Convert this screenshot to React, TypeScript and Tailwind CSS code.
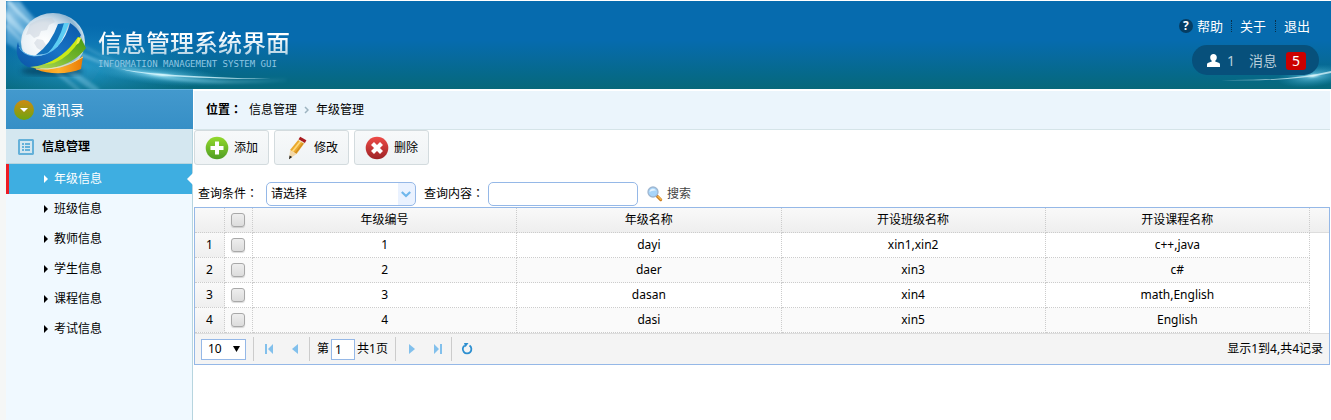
import React from "react";

const rows = [
  ["1", "dayi", "xin1,xin2", "c++,java"],
  ["2", "daer", "xin3", "c#"],
  ["3", "dasan", "xin4", "math,English"],
  ["4", "dasi", "xin5", "English"],
];
const heads = ["年级编号", "年级名称", "开设班级名称", "开设课程名称"];
const menu = ["年级信息", "班级信息", "教师信息", "学生信息", "课程信息", "考试信息"];

function HeaderArt() {
  return (
    <>
      <svg className="absolute left-0 top-0" width="360" height="88" viewBox="0 0 360 88" aria-hidden="true">
        <defs>
          <radialGradient id="corner" gradientUnits="userSpaceOnUse" cx="4" cy="14" r="120">
            <stop offset="0" stopColor="#bfe4f8" stopOpacity="0.75" />
            <stop offset="0.3" stopColor="#5fb4e2" stopOpacity="0.5" />
            <stop offset="1" stopColor="#1c8fc8" stopOpacity="0" />
          </radialGradient>
          <radialGradient id="flare">
            <stop offset="0" stopColor="#d9fbff" stopOpacity="0.95" />
            <stop offset="0.25" stopColor="#6cc8e6" stopOpacity="0.6" />
            <stop offset="1" stopColor="#2a9cc4" stopOpacity="0" />
          </radialGradient>
          <radialGradient id="haze">
            <stop offset="0" stopColor="#2fa6d6" stopOpacity="0.7" />
            <stop offset="1" stopColor="#1688bd" stopOpacity="0" />
          </radialGradient>
          <linearGradient id="streak" gradientUnits="userSpaceOnUse" x1="0" x2="290" y1="0" y2="0">
            <stop offset="0" stopColor="#d8f2ff" stopOpacity="0.7" />
            <stop offset="0.35" stopColor="#7cc8e8" stopOpacity="0.5" />
            <stop offset="0.55" stopColor="#b5edfa" stopOpacity="0.7" />
            <stop offset="1" stopColor="#7fd0ea" stopOpacity="0" />
          </linearGradient>
          <filter id="soft"><feGaussianBlur stdDeviation="1.4" /></filter>
        </defs>
        <ellipse cx="80" cy="66" rx="120" ry="42" fill="url(#haze)" />
        <path d="M0 0H14Q40 36 92 60L110 88H75Q30 60 0 42Z" fill="url(#corner)" filter="url(#soft)" />
        <g filter="url(#soft)" fill="none" stroke="url(#streak)">
          <path d="M2 0Q40 46 110 66T280 79" strokeWidth="3" />
          <path d="M60 32Q90 58 150 74" strokeWidth="2" opacity="0.6" />
          <path d="M-4 10Q30 48 92 90" strokeWidth="6" opacity="0.7" />
          <path d="M0 24Q30 56 74 90" strokeWidth="4" opacity="0.5" />
        </g>
        <ellipse cx="155" cy="74" rx="70" ry="10" fill="url(#flare)" transform="rotate(5 155 74)" />
        <path d="M115 68Q150 75 265 78Q150 78 115 68" fill="#d7f7ff" opacity="0.8" />
      </svg>
      <svg className="absolute bottom-0 right-0" width="150" height="45" viewBox="0 0 150 45" aria-hidden="true">
        <ellipse cx="132" cy="32" rx="36" ry="11" fill="url(#flare)" transform="rotate(-6 132 32)" />
        <path d="M40 36Q110 37 150 27V29Q110 38 40 36" fill="#e4fbff" opacity="0.7" />
      </svg>
    </>
  );
}

function Globe() {
  return (
    <svg width="88" height="88" viewBox="0 1 88 88" className="shrink-0" aria-hidden="true">
      <defs>
        <radialGradient id="gl" cx="0.36" cy="0.5" r="0.66">
          <stop offset="0" stopColor="#ffffff" />
          <stop offset="0.5" stopColor="#eaf1f6" />
          <stop offset="0.85" stopColor="#8fb6d2" />
          <stop offset="1" stopColor="#e8f4fb" />
        </radialGradient>
        <linearGradient id="bl" x1="0" y1="1" x2="1" y2="0">
          <stop offset="0" stopColor="#0b56a6" />
          <stop offset="0.5" stopColor="#1873c6" />
          <stop offset="1" stopColor="#0a58a8" />
        </linearGradient>
        <linearGradient id="gr" x1="0" y1="1" x2="1" y2="0">
          <stop offset="0" stopColor="#b6dc5c" />
          <stop offset="0.5" stopColor="#76b82f" />
          <stop offset="1" stopColor="#489a10" />
        </linearGradient>
        <linearGradient id="or" x1="0" y1="0" x2="1" y2="0">
          <stop offset="0" stopColor="#f08a0c" />
          <stop offset="0.5" stopColor="#ffb22e" />
          <stop offset="1" stopColor="#e97a04" />
        </linearGradient>
        <filter id="sh"><feGaussianBlur stdDeviation="2.5" /></filter>
      </defs>
      <ellipse cx="46" cy="71" rx="31" ry="5" fill="#03304f" opacity="0.6" filter="url(#sh)" />
      <ellipse cx="47" cy="42" rx="32" ry="29" fill="url(#gl)" />
      <path d="M24 24Q34 17 46 18L49 22 43 25 41 30 35 31 33 36 28 38 24 34 20 35ZM31 39l6 1 3 5-4 6-5-3-3-5z" fill="#c3ccd6" opacity="0.45" />
      <path d="M30 55Q45 44 52 24L60 23Q56 42 44 54Z" fill="#1272bd" />
      <path d="M41 54Q53 42 58 23L63 23Q57 43 46 53Z" fill="#5ccdf3" />
      <path d="M12 42Q14 54 28 56Q42 56 52 46Q61 36 64 23Q71 27 75 35Q66 53 50 61Q35 69 22 67Q13 63 11 54Q10 47 12 42Z" fill="url(#bl)" />
      <path d="M13 47Q17 55 28 56Q42 56 52 46" fill="none" stroke="#6bc4f1" strokeWidth="0.8" />
      <path d="M24 67Q56 64 72 37L75 38L80 48Q68 64 46 68Q33 70 24 67Z" fill="url(#gr)" />
      <path d="M36 65Q58 58 72 37L75 38Q64 57 48 63Z" fill="#c9ea18" />
      <path d="M72 38L75 38L73 43L70 45Z" fill="#eef04a" />
      <path d="M28 68Q34 70 46 69Q64 67 77 56L75 69Q64 74 46 73Q34 72 28 68Z" fill="url(#or)" />
      <path d="M30 69Q54 71 77 57" fill="none" stroke="#ffe9a8" strokeWidth="0.8" />
    </svg>
  );
}

function AddIcon() {
  return (
    <svg width="24" height="24" viewBox="0 0 24 24" aria-hidden="true">
      <defs><linearGradient id="add" x2="0" y2="1"><stop stopColor="#93d92c" /><stop offset="1" stopColor="#4f9d25" /></linearGradient></defs>
      <circle cx="12" cy="12" r="11.3" fill="url(#add)" />
      <path d="M10 5.5h4V10h4.5v4H14v4.5h-4V14H5.5v-4H10z" fill="#fff" />
    </svg>
  );
}
function EditIcon() {
  return (
    <svg width="24" height="24" viewBox="0 0 24 24" aria-hidden="true">
      <path d="M5 14L13.500 3.500l6 3.500L11.500 18z" fill="#eaa92d" />
      <path d="M7.500 15.500L16 4.800" stroke="#ffd878" strokeWidth="1.800" />
      <path d="M10.500 17.200L18.600 6.500" stroke="#d08a1e" strokeWidth="1.200" />
      <path d="M13.500 3.300L15.200.8l6.200 3.400-1.500 2.800z" fill="#a91b20" />
      <path d="M13.200 3.800l6.200 3.600" stroke="#e8e1d2" strokeWidth="1" />
      <path d="M5 14l6.500 4-7.200 5z" fill="#f3d8a8" />
      <path d="M4.600 19.500l2.600 1.600L4 23.300z" fill="#1d1d1d" />
    </svg>
  );
}
function DeleteIcon() {
  return (
    <svg width="24" height="24" viewBox="0 0 24 24" aria-hidden="true">
      <defs><linearGradient id="del" x2="0" y2="1"><stop stopColor="#ee4b47" /><stop offset="1" stopColor="#9d2326" /></linearGradient></defs>
      <circle cx="12" cy="12" r="11.3" fill="url(#del)" />
      <path d="M7.5 7.5l9 9m0-9l-9 9" stroke="#fff" strokeWidth="4.2" />
    </svg>
  );
}

const tools = [
  { label: "添加", icon: <AddIcon /> },
  { label: "修改", icon: <EditIcon /> },
  { label: "删除", icon: <DeleteIcon /> },
];

const box =
  "mb-px ml-[6px] block size-[14px] appearance-none rounded-[3px] border border-[#a8a8a8] bg-linear-to-b from-[#eeeeee] to-[#dcdcdc] shadow-[0_1px_1px_rgba(0,0,0,0.15)] checked:from-[#70aee8] checked:to-[#4a90d9]";
const cell = "h-[25px] border-b border-r border-dotted border-[#cccccc] p-0 text-center font-normal";

function Colon() {
  return <span className="font-['Noto_Sans_CJK_TC',sans-serif] leading-none">：</span>;
}

function PageButton({ label, d }: { label: string; d: string }) {
  return (
    <button type="button" aria-label={label} className="flex size-[26px] items-center justify-center">
      <svg width="10" height="10" viewBox="0 0 10 10" fill="#82c0ec" aria-hidden="true"><path d={d} /></svg>
    </button>
  );
}

function Separator() {
  return <span className="h-6 w-px shrink-0 bg-[#cccccc]" />;
}

export default function App() {
  return (
    <div className="flex min-h-screen flex-col border-l-[6px] border-[#f5f7f6] bg-white pt-px font-['Noto_Sans','Noto_Sans_CJK_SC',sans-serif] text-[12px] leading-4 text-black">
      <header className="relative flex h-[88px] justify-between overflow-hidden bg-linear-to-b from-[#066bae] from-45% via-[#076a9c] via-65% to-[#07687a]">
        <HeaderArt />
        <div className="relative flex items-start">
          <Globe />
          <div className="pl-1 pt-[26px]">
            <h1 className="bg-linear-to-b from-white from-30% to-[#a5cbdf] bg-clip-text text-[24px] font-medium leading-8 text-transparent">信息管理系统界面</h1>
            <p className="font-['DejaVu_Sans_Mono',monospace] text-[9px] leading-[10px] text-[#8fc6e2]">INFORMATION MANAGEMENT SYSTEM GUI</p>
          </div>
        </div>
        <div className="relative flex flex-col items-end gap-[9px] pt-[15px] text-white">
          <nav className="flex items-center pr-[21px] text-[13px] leading-5">
            <a href="#help" className="flex items-center gap-1 pr-2">
              <span className="flex size-[14px] items-center justify-center rounded-full bg-[#063d63] text-[12px] font-bold leading-3">?</span>
              帮助
            </a>
            <a href="#about" className="relative px-[9px] before:absolute before:left-0 before:top-1 before:h-3 before:border-l before:border-dotted before:border-[#08304a]">关于</a>
            <a href="#exit" className="relative pl-[9px] before:absolute before:left-0 before:top-1 before:h-3 before:border-l before:border-dotted before:border-[#08304a]">退出</a>
          </nav>
          <div className="mr-3 flex h-[30px] w-[127px] items-center rounded-full bg-[#07507b] pl-[15px] pt-px text-[14px] leading-5 text-[#b8ceda]">
            <svg width="13" height="13" viewBox="0 0 13 13" fill="#fff" aria-hidden="true">
              <path d="M6.5 0C8.5 0 9.8 1.300 9.800 3.200c0 1.600-.7 2.900-1.600 3.600v.8l3.400 1.100c1 .4 1.400 1 1.400 2V13H0v-2.300c0-1 .4-1.600 1.400-2l3.400-1.100v-.8C3.900 6.100 3.200 4.800 3.200 3.200 3.200 1.300 4.500 0 6.500 0z" />
            </svg>
            <span className="pl-[7px]">1</span>
            <span className="pl-[14px]">消息</span>
            <span className="ml-[9px] h-[18px] w-5 rounded-[3px] bg-[#cc0000] text-center leading-[18px] text-white">5</span>
          </div>
        </div>
      </header>

      <div className="flex grow">
        <aside className="flex w-[187px] shrink-0 flex-col border-r border-[#b7d5df] bg-[#f0f9ff]">
          <h2 className="-mr-px flex h-10 items-center gap-2 border-t border-[#61b1dc] bg-linear-to-b from-[#4399cd] to-[#368fc6] pl-2 text-[14px] leading-5 text-white">
            <svg width="20" height="20" viewBox="0 0 20 20" aria-hidden="true">
              <defs><linearGradient id="tg" x2="0" y2="1"><stop stopColor="#cf8a11" /><stop offset="1" stopColor="#6da510" /></linearGradient></defs>
              <circle cx="10" cy="10" r="10" fill="url(#tg)" />
              <path d="M6 8h8l-4 4z" fill="#fff" />
            </svg>
            通讯录
          </h2>
          <h3 className="flex h-[35px] items-center gap-2 border-b border-[#b7d5df] bg-[#d4e7f0] pl-3 pt-px font-bold">
            <svg width="16" height="16" viewBox="0 0 16 16" fill="#65b1d9" aria-hidden="true">
              <path fillRule="evenodd" d="M1 0h14l1 1v14l-1 1H1l-1-1V1zM2 2v12h12V2z" />
              <path d="M4 4h2v2H4zM7 4h5v2H7zM4 7h2v2H4zM7 7h5v2H7zM4 10h2v2H4zM7 10h5v2H7z" />
            </svg>
            信息管理
          </h3>
          <ul>
            {menu.map((m, i) => (
              <li key={m}>
                <a
                  href={`#m${i}`}
                  className={
                    i === 0
                      ? "relative flex h-[30px] items-center gap-[6px] border-l-[3px] border-[#ed1c24] bg-[#3eaee1] pl-[34px] text-white"
                      : "flex h-[30px] items-center gap-[6px] pl-[37px]"
                  }
                >
                  <svg width="5" height="8" viewBox="0 0 5 8" fill="currentColor" aria-hidden="true"><path d="M1 0l4 4-4 4z" /></svg>
                  {m}
                  {i === 0 && (
                    <svg className="absolute -right-px top-[9px]" width="6" height="12" viewBox="0 0 6 12" fill="#fff" aria-hidden="true"><path d="M6 0v12L0 6z" /></svg>
                  )}
                </a>
              </li>
            ))}
          </ul>
        </aside>

        <main className="min-w-0 grow pl-px pr-px pt-[2px]">
          <nav className="flex h-[39px] items-center border-b border-[#d5e4e8] bg-[#ebf5fc] pl-3">
            <b>位置<Colon /></b>
            <a href="#info" className="pl-[7px]">信息管理</a>
            <svg className="mx-[7px]" width="5" height="8" viewBox="0 0 5 8" fill="none" stroke="#9db4c0" strokeWidth="1.5" aria-hidden="true"><path d="M1 1l3 3-3 3" /></svg>
            <span>年级管理</span>
          </nav>
          <div className="flex gap-[5px]">
            {tools.map((t) => (
              <button key={t.label} type="button" className="flex h-[35px] w-[75px] items-center gap-[5px] rounded-[3px] border border-[#d3dbde] bg-linear-to-b from-[#f7f9fa] to-[#eff3f5] pl-[10px]">
                {t.icon}
                {t.label}
              </button>
            ))}
          </div>
          <form className="flex items-center pb-px pl-1 pt-[17px]" onSubmit={(e) => e.preventDefault()}>
            <label htmlFor="field" className="w-[68px]">查询条件<Colon /></label>
            <span className="relative">
              <select id="field" className="block h-6 w-[150px] appearance-none rounded-[5px] border border-[#95b8e7] bg-linear-to-r from-white from-[131px] to-[#eaf2ff] to-[131px] pl-1">
                <option>请选择</option>
              </select>
              <svg className="pointer-events-none absolute right-[5px] top-[9px]" width="10" height="7" viewBox="0 0 10 7" fill="none" stroke="#6fb7ec" strokeWidth="2.2" aria-hidden="true"><path d="M.8 1L5 5l4.200-4" /></svg>
            </span>
            <label htmlFor="query" className="w-[72px] pl-2">查询内容<Colon /></label>
            <input id="query" type="text" className="h-6 w-[150px] rounded-[5px] border border-[#95b8e7] bg-white px-1 outline-none" />
            <button type="submit" className="flex items-center gap-1 pl-[9px] text-[#444444]">
              <svg width="16" height="16" viewBox="0 0 16 16" aria-hidden="true">
                <path d="M10 10l3.700 3.700" stroke="#c7781c" strokeWidth="3" strokeLinecap="round" />
                <path d="M11 10.500l3 3" stroke="#f5b74c" strokeWidth="1.500" strokeLinecap="round" />
                <circle cx="6" cy="6" r="5" fill="#a8d5fa" stroke="#9fb6d0" strokeWidth="1.300" />
                <path d="M2.500 6A3.500 3.500 0 0 1 9 4.500Q5 4 2.500 6" fill="#e5f4ff" />
              </svg>
              搜索
            </button>
          </form>

          <section className="border border-[#95b8e7]">
            <table className="w-full table-fixed border-separate border-spacing-0">
              <colgroup>
                <col className="w-[30px]" />
                <col className="w-[28px]" />
                <col /><col /><col /><col />
                <col className="w-[19px]" />
              </colgroup>
              <thead>
                <tr className="bg-linear-to-b from-[#f9f9f9] to-[#eeeeee]">
                  <th className={cell} aria-label="序号" />
                  <th className={cell}><input type="checkbox" aria-label="全选" className={box} /></th>
                  {heads.map((h) => <th key={h} className={cell}>{h}</th>)}
                  <td className="border-b border-[#dddddd]" />
                </tr>
              </thead>
              <tbody>
                {rows.map((r) => (
                  <tr key={r[0]} className="even:bg-[#fafafa]">
                    <td className={`${cell} bg-linear-to-b from-[#f9f9f9] to-[#efefef]`}>{r[0]}</td>
                    <td className={cell}><input type="checkbox" aria-label={`选择 ${r[1]}`} className={box} /></td>
                    {r.map((c, i) => <td key={i} className={cell}>{c}</td>)}
                    <td className="bg-white" />
                  </tr>
                ))}
              </tbody>
            </table>
            <footer className="flex h-[31px] items-center justify-between border-t border-[#dddddd] bg-[#f4f4f4] px-[6px]">
              <div className="flex items-center">
                <span className="relative mr-[7px]">
                  <select aria-label="每页记录数" className="block h-[21px] w-[45px] appearance-none border border-[#95b8e7] bg-white pl-[6px]">
                    <option>10</option>
                  </select>
                  <svg className="pointer-events-none absolute right-[6px] top-[7px]" width="7" height="6" viewBox="0 0 7 6" aria-hidden="true"><path d="M0 0h7L3.500 6z" /></svg>
                </span>
                <Separator />
                <span className="flex pl-[3px]">
                  <PageButton label="首页" d="M0 0h2v10H0zM8 0v10L3 5z" />
                  <PageButton label="上一页" d="M7 0v10L1 5z" />
                </span>
                <Separator />
                <label className="flex items-center gap-px px-[7px]">
                  第
                  <input type="text" defaultValue="1" aria-label="页码" className="mx-px h-[21px] w-6 border border-[#95b8e7] bg-white pl-[3px] outline-none" />
                  共1页
                </label>
                <Separator />
                <span className="flex pl-[3px]">
                  <PageButton label="下一页" d="M2 0v10l6-5z" />
                  <PageButton label="末页" d="M1 0v10l5-5zM7 0h2v10H7z" />
                </span>
                <Separator />
                <button type="button" aria-label="刷新" className="ml-[7px] flex size-4 items-center justify-center">
                  <svg width="12" height="12" viewBox="0 0 12 12" aria-hidden="true">
                    <path d="M3.800 2.500A4.300 4.300 0 1 0 8.500 2.600" fill="none" stroke="#2d8fd0" strokeWidth="1.800" />
                    <path d="M3 0h4.500L4.500 4.200z" fill="#2d8fd0" />
                  </svg>
                </button>
              </div>
              <span>显示1到4,共4记录</span>
            </footer>
          </section>
        </main>
      </div>
    </div>
  );
}
